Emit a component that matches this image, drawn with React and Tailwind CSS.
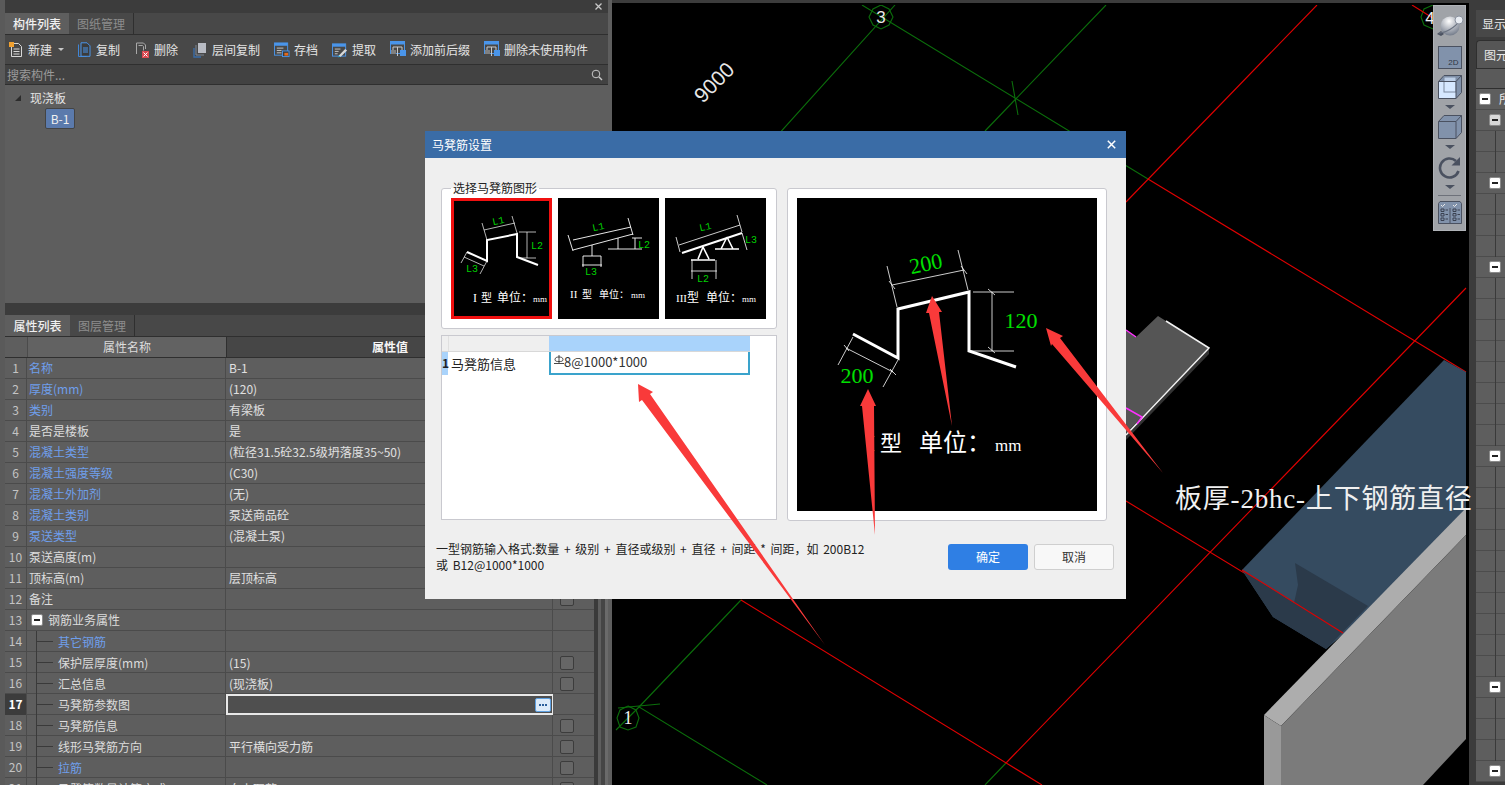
import React from "react";

const SANS = "font-['Noto_Sans_CJK_SC','Liberation_Sans',sans-serif]";

const rows = [
  ["名称", "B-1", 1, 0],
  ["厚度(mm)", "(120)", 1, 0],
  ["类别", "有梁板", 1, 0],
  ["是否是楼板", "是", 0, 0],
  ["混凝土类型", "(粒径31.5砼32.5级坍落度35~50)", 1, 0],
  ["混凝土强度等级", "(C30)", 1, 0],
  ["混凝土外加剂", "(无)", 1, 0],
  ["混凝土类别", "泵送商品砼", 1, 0],
  ["泵送类型", "(混凝土泵)", 1, 0],
  ["泵送高度(m)", "", 0, 0],
  ["顶标高(m)", "层顶标高", 0, 0],
  ["备注", "", 0, 0],
  ["钢筋业务属性", "", 0, 1],
  ["其它钢筋", "", 1, 2],
  ["保护层厚度(mm)", "(15)", 0, 2],
  ["汇总信息", "(现浇板)", 0, 2],
  ["马凳筋参数图", "", 0, 2],
  ["马凳筋信息", "", 0, 2],
  ["线形马凳筋方向", "平行横向受力筋", 0, 2],
  ["拉筋", "", 1, 2],
  ["马凳筋数量计算方式", "向上取整+1", 0, 2],
];
const checks = [12, 15, 16, 18, 19, 20, 21];

function Minus({ grey }) {
  return (
    <span className={`flex h-[12px] w-[12px] shrink-0 items-center justify-center rounded-[2px] border border-[#8a8a8a] ${grey ? "bg-[#d8d8d8]" : "bg-white"}`}>
      <span className="h-[2px] w-[6px] bg-[#222]" />
    </span>
  );
}

function Doc({ c = "#d8d8d8" }) {
  return <path d="M3.5 1.5h7l3 3v10h-10z" fill="none" stroke={c} />;
}

const tools = [
  ["复制", <svg key="a" width="16" height="16" viewBox="0 0 16 16"><path d="M2.5 2.5v12h8" fill="none" stroke="#3f86d8" /><path d="M5 .8h6l3 3v10.5H5z" fill="#3b3b3b" stroke="#4a95ea" /><path d="M7 6h5M7 8h5M7 10h5" stroke="#4a95ea" /></svg>],
  ["删除", <svg key="b" width="16" height="16" viewBox="0 0 16 16"><path d="M2.5 1v11M2.5 1h7l2 2v4" fill="none" stroke="#a8a8a8" /><path d="M4.5 3.5h4l1 1v4" fill="none" stroke="#a8a8a8" /><rect x="8" y="9" width="7" height="7" fill="#d9484f" /><path d="M9.5 10.5l4 4M13.5 10.5l-4 4" stroke="#fff" /></svg>],
  ["层间复制", <svg key="c" width="16" height="16" viewBox="0 0 16 16"><rect x="6" y="1" width="8" height="10" fill="#b9bcc4" /><path d="M4 3v10h8" fill="none" stroke="#7f8794" /><path d="M2 6v9h7" fill="none" stroke="#3a6ca6" strokeWidth="1.4" /></svg>],
  ["存档", <svg key="d" width="16" height="16" viewBox="0 0 17 16"><rect x=".5" y=".5" width="14" height="13" fill="none" stroke="#4a95ea" /><rect x=".5" y=".5" width="14" height="3" fill="#4a95ea" /><path d="M3 6h7M3 8.500h5M3 11h5" stroke="#c8c8c8" /><rect x="9" y="9" width="7" height="6" fill="#3b3b3b" stroke="#4a95ea" /><rect x="11" y="11" width="4" height="3" fill="#e4691c" /></svg>],
  ["提取", <svg key="e" width="16" height="16" viewBox="0 0 17 16"><rect x=".5" y="1.500" width="14" height="13" fill="none" stroke="#4a95ea" /><rect x=".5" y="1.500" width="14" height="3" fill="#4a95ea" /><path d="M3 7h6M3 9.500h4M3 12h3" stroke="#c8c8c8" /><path d="M7 14l7-7 2 1.500-7 7z" fill="#d8d8d8" /><path d="M6 16l2-2 1 1z" fill="#29c4e6" /></svg>],
  ["添加前后缀", <svg key="f" width="16" height="17" viewBox="0 0 16 17"><rect x=".5" y=".5" width="14" height="12" fill="none" stroke="#4a95ea" /><rect x=".5" y=".5" width="14" height="3" fill="#4a95ea" /><path d="M3 6h9M3 6v3M7.500 6v9M12 6v3" stroke="#c8c8c8" fill="none" /><rect x="10" y="9" width="6" height="6" fill="#4a95ea" /><rect x="1" y="9" width="5" height="4" fill="#808080" /></svg>],
  ["删除未使用构件", <svg key="g" width="16" height="17" viewBox="0 0 16 17"><rect x=".5" y=".5" width="14" height="12" fill="none" stroke="#4a95ea" /><rect x=".5" y=".5" width="14" height="3" fill="#4a95ea" /><path d="M3 6h9M3 6v3M7.500 6v9M12 6v3" stroke="#c8c8c8" fill="none" /><rect x="10" y="9" width="6" height="6" fill="#4a95ea" /><rect x="1" y="9" width="5" height="4" fill="#808080" /></svg>],
];

function PanelHeader({ a, b, aw, bw }) {
  return (
    <div className="flex h-[22px] shrink-0 border-b border-[#2f2f2f] bg-[#484848] text-[12px]">
      <div className={`flex items-center justify-center bg-[#5e5e5e] font-medium text-[#f0f0f0] ${aw}`}>{a}</div>
      <div className={`flex items-center justify-center border-r border-[#2f2f2f] text-[#8d8d8d] ${bw}`}>{b}</div>
    </div>
  );
}

function Row({ n, r }) {
  const [name, val, link, level] = r;
  const sel = n === 17;
  return (
    <div className="grid h-[21px] grid-cols-[22px_199px_327px_41px] border-b border-[#4b4b4b] bg-[#5e5e5e] text-[12px] leading-[20px]">
      <div className={`border-r border-[#4b4b4b] text-center ${sel ? "bg-[#3c3c3c] font-bold text-white" : "text-[#c4c4c4]"}`}>{n}</div>
      <div className={`flex items-center border-r border-[#4b4b4b] ${link ? "text-[#6f9fec]" : "text-[#dcdcdc]"}`}>
        {level === 0 && <span className="pl-[2px]">{name}</span>}
        {level === 1 && (
          <>
            <span className="ml-[4px] mr-[5px]"><Minus /></span>
            <span>{name}</span>
          </>
        )}
        {level === 2 && (
          <>
            <span className="ml-[9px] h-[21px] w-[1px] bg-[#3a3a3a]" />
            <span className="h-[1px] w-[16px] bg-[#3a3a3a]" />
            <span className="ml-[5px]">{name}</span>
          </>
        )}
      </div>
      <div className={`flex items-center justify-between border-r border-[#4b4b4b] pl-[3px] text-[#e0e0e0] ${sel ? "border-2 border-[#e8e8e8] bg-[#4f4f4f] pr-[1px]" : ""}`}>
        <span>{val}</span>
        {sel && (
          <span className="flex h-[14px] w-[16px] items-center justify-center gap-[1px] rounded-[2px] border border-[#5d9fe0] bg-[#dcebfa]">
            <span className="h-[2px] w-[2px] bg-[#2a5f9c]" />
            <span className="h-[2px] w-[2px] bg-[#2a5f9c]" />
            <span className="h-[2px] w-[2px] bg-[#2a5f9c]" />
          </span>
        )}
      </div>
      <div className="flex items-center justify-center pr-[13px]">
        {checks.includes(n) && <span className="h-[14px] w-[14px] rounded-[2px] border border-[#3c3c3c] bg-[#666]" />}
      </div>
    </div>
  );
}

function LeftColumn() {
  return (
    <div className="flex w-[612px] shrink-0">
      <div className="w-[5px] bg-[#5a5a5a]" />
      <div className="flex w-[603px] flex-col">
        <div className="flex h-[13px] shrink-0 items-center justify-end bg-[#3c3c3c] pr-[6px]">
          <svg width="7" height="7" viewBox="0 0 7 7"><path d="M.5.5l6 6M6.500.5l-6 6" stroke="#c8c8c8" strokeWidth="1.3" /></svg>
        </div>
        <PanelHeader a="构件列表" b="图纸管理" aw="w-[64px]" bw="w-[65px]" />
        <div className="flex h-[30px] shrink-0 items-center gap-[14px] border-b border-[#2f2f2f] bg-[#484848] pl-[3px] text-[12px] text-[#e4e4e4]">
          <div className="flex w-[54px] items-center gap-[4px]">
            <svg width="16" height="16" viewBox="0 0 16 16" className="shrink-0"><Doc /><path d="M5.500 7h6M5.500 9.500h6M5.500 12h6" stroke="#d8d8d8" /><rect x="1" y="0" width="5" height="5" fill="#f0a030" /></svg>
            <span className="shrink-0">新建</span>
            <span className="ml-[2px] h-0 w-0 shrink-0 border-x-[3px] border-t-[3px] border-x-transparent border-t-[#c8c8c8]" />
          </div>
          {tools.map(([t, ic]) => (
            <div key={t} className="flex items-center gap-[4px]">
              {ic}
              <span>{t}</span>
            </div>
          ))}
        </div>
        <div className="flex h-[20px] shrink-0 items-center justify-between border-b border-[#2f2f2f] bg-[#424242] pl-[2px] pr-[5px] text-[12px] text-[#9a9a9a]">
          <span>搜索构件...</span>
          <svg width="12" height="12" viewBox="0 0 12 12"><circle cx="5" cy="5" r="3.800" fill="none" stroke="#c8c8c8" /><path d="M8 8l3 3" stroke="#c8c8c8" strokeWidth="1.400" /></svg>
        </div>
        <div className="flex h-[213px] shrink-0 flex-col bg-[#5e5e5e] text-[12px] text-[#e4e4e4]">
          <div className="flex h-[23px] items-center pl-[10px] pt-[2px]">
            <span className="h-0 w-0 border-b-[6px] border-l-[6px] border-b-[#2c2c2c] border-l-transparent" />
            <span className="ml-[9px]">现浇板</span>
          </div>
          <div className="ml-[40px] flex h-[21px] w-[30px] items-center justify-center rounded-[2px] border border-[#444] bg-[#5b7aac] text-[#f0f0f0]">B-1</div>
        </div>
        <div className="h-[5px] shrink-0 bg-[#5e5e5e]" />
        <div className="h-[12px] shrink-0 bg-[#3c3c3c]" />
        <PanelHeader a="属性列表" b="图层管理" aw="w-[65px]" bw="w-[65px]" />
        <div className="flex min-h-0 flex-1">
          <div className="w-[589px] overflow-hidden">
            <div className="grid h-[21px] grid-cols-[22px_199px_327px_41px] border-b border-[#2f2f2f] text-[12px] leading-[20px]">
              <div className="bg-[#5e5e5e]" />
              <div className="border-l border-[#4b4b4b] bg-[#626262] text-center text-[#dcdcdc]">属性名称</div>
              <div className="border-l border-[#2f2f2f] bg-[#464646] text-center font-bold text-[#f5f5f5]">属性值</div>
              <div className="bg-[#5e5e5e]" />
            </div>
            {rows.map((r, i) => <Row key={i} n={i + 1} r={r} />)}
          </div>
          <div className="w-[4px] bg-[#3a3a3a]" />
          <div className="flex-1 bg-[#5e5e5e]" />
          <div className="w-[4px] bg-[#454545]" />
          <div className="w-[3px] bg-[#6a6a6a]" />
        </div>
      </div>
      <div className="w-[4px] bg-[#5e5e5e]" />
    </div>
  );
}

function Canvas() {
  return (
    <div className="relative w-[857px] shrink-0 border-t-[3px] border-[#3c3c3c] bg-black">
      <svg width="857" height="782" viewBox="612 3 857 782" className="block">
        <defs>
          <clipPath id="cv"><rect x="612" y="5" width="857" height="780" /></clipPath>
        </defs>
        <g clipPath="url(#cv)">
          <g fill="none" stroke="#0b6e0b" strokeWidth="1.100">
            <path d="M862 5L1148 179M895 5L741 176M741 600L639 707L767 785M1106 5L985 131M1012 81L1018 115" />
            <path d="M616 730L639 707M618 708L660 704M1006 763L985 785" />
            <polygon points="881,5 889,9 893,17 889,25 881,29 873,25 869,17 873,9" />
            <polygon points="628,706 636,710 639,718 636,727 628,730 620,727 617,718 620,710" />
            <polygon points="1433,5 1424,9 1421,17 1424,25 1433,29 1441,25 1445,17 1441,9" />
          </g>
          <g fill="none" stroke="#e00000" strokeWidth="1.100">
            <path d="M1317 5L1126 202M1148 179L1466 372M1466 288L1006 763M741 600L1042 785M1126 501L1343 633M1412 5L1436 20" />
          </g>
          <polygon points="1444,360 1466,372 1466,530 1326,649 1273,617 1242,570" fill="#354b60" />
          <polygon points="1242,570 1273,617 1326,649 1368,606 1295,563 1298,585 1294,603" fill="#2b3a4a" />
          <path d="M1242 570L1343 633" stroke="#e00000" strokeWidth="1.100" />
          <polygon points="1264,715 1466,508 1466,535 1281,726" fill="#adadad" />
          <polygon points="1281,726 1466,535 1466,739 1423,785 1281,785" fill="#7b7b7b" />
          <polygon points="1264,715 1281,726 1281,785 1264,785" fill="#999999" />
          <polygon points="1126,440 1209,354 1209,348 1126,430" fill="#333333" />
          <polygon points="1126,330 1136,337 1158,316 1209,348 1126,433" fill="#555555" />
          <path d="M1166 321L1209 348L1126 435" fill="none" stroke="#f2f2f2" strokeWidth="1.500" />
          <path d="M1126 330L1136 337M1126 408L1142 417L1137 424" fill="none" stroke="#ff30ff" strokeWidth="1.500" />
          <text x="714.500" y="90" transform="rotate(-45 714 83)" textAnchor="middle" fontFamily="Liberation Sans" fontSize="21" fill="#e8e8e8">9000</text>
          <text x="881" y="23" textAnchor="middle" fontFamily="Liberation Sans" fontSize="17" fill="#e8e8e8">3</text>
          <text x="628" y="724" textAnchor="middle" fontFamily="Liberation Serif" fontSize="18" fill="#f0f0f0">1</text>
          <text x="1430" y="24" textAnchor="middle" fontFamily="Liberation Sans" fontSize="17" fill="#f0f0f0">4</text>
        </g>
      </svg>
      <ViewBar />
    </div>
  );
}

function Arrow2() {
  return <span className="my-[6px] h-0 w-0 shrink-0 border-x-[5px] border-t-[4px] border-x-transparent border-t-[#4a5160]" />;
}

function ViewBar() {
  return (
    <div className="absolute left-[821px] top-[2px] flex h-[226px] w-[33px] flex-col items-center border border-[#b0b3b8] bg-[#a0a3a8] pt-[7px]">
      <svg width="28" height="24" viewBox="0 0 28 24" className="shrink-0">
        <defs>
          <radialGradient id="sp" cx="0.45" cy="0.25" r="0.85"><stop offset="0" stopColor="#ffffff" /><stop offset="1" stopColor="#626b7c" /></radialGradient>
        </defs>
        <path d="M1 21l4-3 3 3-3 2z" fill="#4a5160" />
        <circle cx="14" cy="13" r="9.500" fill="url(#sp)" />
        <path d="M3 20C9 20 19 15 24 7" fill="none" stroke="#6a7280" strokeWidth="1.200" />
        <circle cx="23" cy="7" r="4" fill="#e8ecf2" stroke="#8a919e" />
      </svg>
      <div className="relative mt-[9px] h-[23px] w-[24px] shrink-0 border border-[#4a5160] bg-[#8192ab]">
        <span className="absolute bottom-0 right-[2px] font-['Liberation_Sans',sans-serif] text-[8px] leading-[10px] text-[#2f3644]">2D</span>
      </div>
      <svg width="24" height="24" viewBox="0 0 24 24" className="mt-[6px] shrink-0"><path d="M.5 6.500L6 .5h17.500v17L18 23.500H.5z" fill="#8192ab" stroke="#4a5160" /><rect x="1" y="7" width="17" height="16" fill="#d6e8ff" /><rect x="6" y="2" width="12" height="15" fill="#d6e8ff" fillOpacity=".7" stroke="#7c8aa0" /><path d="M.5 6.500h17.500v17M18 6.500l5.500-6" fill="none" stroke="#4a5160" /></svg>
      <Arrow2 />
      <svg width="24" height="24" viewBox="0 0 24 24" className="shrink-0"><path d="M.5 6.500L6 .5h17.500v17L18 23.500H.5z" fill="#8192ab" stroke="#4a5160" /><path d="M.5 6.500h17.500v17M18 6.500l5.500-6" fill="none" stroke="#4a5160" /></svg>
      <Arrow2 />
      <svg width="24" height="23" viewBox="0 0 24 23" className="mt-[1px] shrink-0"><path d="M20.500 15A9.500 9.500 0 1 1 18 5" fill="none" stroke="#4a5160" strokeWidth="2.600" /><path d="M22 1v8.500h-8.500z" fill="#4a5160" /></svg>
      <Arrow2 />
      <div className="h-[1px] w-[23px] shrink-0 bg-[#6d717a]" />
      <svg width="24" height="23" viewBox="0 0 24 23" className="mt-[5px] shrink-0"><path d="M.5 2.500L2 .5h20l1.500 2v20H.5z" fill="#8192ab" stroke="#4a5160" /><path d="M12 7v15" stroke="#4a5160" /><path d="M3 4l1.500 1.500L7 3M15 4l1.500 1.500L19 3" fill="none" stroke="#e8e8e8" /><path d="M3 8h3v2.500H3zM3 12.500h3v2.500H3zM3 17h3v2.500H3zM15 8h3v2.500h-3zM15 12.500h3v2.500h-3zM15 17h3v2.500h-3z" fill="none" stroke="#3a4150" /><path d="M7.500 9h2.500M7.500 13.500h2.500M7.500 18h2.500M19.500 9h2.500M19.500 13.500h2.500M19.500 18h2.500" stroke="#3a4150" /></svg>
    </div>
  );
}

function RightColumn() {
  const minus = { 0: 1, 1: 2, 4: 3, 8: 3, 17: 3, 28: 3, 32: 3 };
  return (
    <div className="flex min-w-0 flex-1">
      <div className="w-[7px] shrink-0 bg-[#3c3c3c]" />
      <div className="flex min-w-0 flex-1 flex-col overflow-hidden whitespace-nowrap">
        <div className="h-[10px] shrink-0 bg-[#3c3c3c]" />
        <div className="flex h-[27px] shrink-0 items-center bg-[#484848] pl-[6px] text-[12px] text-[#e8e8e8]">显示</div>
        <div className="h-[3px] shrink-0 bg-[#3c3c3c]" />
        <div className="flex h-[28px] shrink-0 items-center rounded-tl-[4px] border-l border-t border-[#2f2f2f] bg-[#565656] pl-[7px] text-[12px] text-[#e8e8e8]">图元</div>
        <div className="h-[21px] shrink-0 border-y border-[#2f2f2f] bg-[#5a5a5a]" />
        <div className="shrink-0 bg-[#5e5e5e]">
          {Array.from({ length: 33 }).map((_, i) => (
            <div key={i} className="flex h-[21px] items-center border-b border-[#4c4c4c] pl-[3px] text-[12px] text-[#e8e8e8]">
              {minus[i] === 1 && <><Minus /><span className="ml-[8px]">所</span></>}
              {minus[i] >= 2 && <span className="ml-[10px]"><Minus grey={minus[i] === 2} /></span>}
              {!minus[i] && <span className="ml-[16px] h-[21px] w-[1px] bg-[#3a3a3a]" />}
            </div>
          ))}
        </div>
      </div>
    </div>
  );
}

function Thumb({ sel, children, vb, w = 101 }) {
  return (
    <div className={`h-[121px] w-[101px] shrink-0 bg-black ${sel ? "border-[3px] border-[#f01010]" : ""}`}>
      <svg width={sel ? 95 : w} height={sel ? 115 : 121} viewBox={vb} className="block">{children}</svg>
    </div>
  );
}

const lbl = { fontFamily: "Liberation Mono", fontSize: 10, fill: "#00d000" };

function Cap({ y, size = 12, parts }) {
  return (
    <text y={y} fontFamily="'Liberation Serif','Noto Sans CJK SC',serif" fontSize={size} fill="#fff">
      {parts.map(([x, t, s]) => (
        <tspan key={x} x={x} fontSize={s || size}>{t}</tspan>
      ))}
    </text>
  );
}

function Dialog() {
  return (
    <div className={`absolute left-[425px] top-[131px] flex h-[468px] w-[701px] flex-col bg-[#efefef] text-[#222] ${SANS}`}>
      <div className="flex h-[27px] shrink-0 items-center justify-between bg-[#3a6ca6] pl-[7px] pr-[10px] text-[12px] text-white">
        <span>马凳筋设置</span>
        <svg width="9" height="9" viewBox="0 0 9 9"><path d="M.8.8l7.400 7.400M8.200.8L.8 8.200" stroke="#fff" strokeWidth="1.500" /></svg>
      </div>
      <div className="flex px-[16px] pt-[30px]">
        <div className="flex w-[336px] flex-col gap-[6px]">
          <div className="relative flex h-[141px] gap-[6px] rounded-[3px] border border-[#c9c9cf] bg-white pl-[9px] pt-[9px]">
            <span className="absolute left-[9px] top-[-9px] px-[2px] text-[12px] leading-[16px] text-[#222] [background:linear-gradient(#efefef_50%,#fff_50%)]">选择马凳筋图形</span>
            <Thumb sel vb="454 201 95 115">
              <path d="M467 252L487 261V240L517 234V257L538 265" fill="none" stroke="#fff" strokeWidth="2" />
              <path d="M482 223L487 240M512 216L517 233M484 230L515 223M519 232H536M519 258H536M527 232V258M467 252L461 263M487 261L480 274M464 257L484 266" fill="none" stroke="#fff" strokeWidth=".7" />
              <text x="499" y="224" transform="rotate(-12 499 224)" textAnchor="middle" {...lbl}>L1</text>
              <text x="537" y="249" textAnchor="middle" {...lbl}>L2</text>
              <text x="472" y="272" textAnchor="middle" {...lbl}>L3</text>
              <Cap y={302} parts={[[473, "I"], [481, "型", 11], [497, "单位："], [533, "mm", 9]]} />
            </Thumb>
            <Thumb vb="558 198 101 121">
              <path d="M573 240L631 227M573 250L633 234M568 235L573 251M628 218L633 235M608 249H632M618 238V249M632 238H642M632 249H642M635 238V249M592 245V256M583 256H601M583 256V267M601 256V267M582 265H602" fill="none" stroke="#fff" strokeWidth=".9" />
              <text x="599" y="230" transform="rotate(-12 599 230)" textAnchor="middle" {...lbl}>L1</text>
              <text x="644" y="248" textAnchor="middle" {...lbl}>L2</text>
              <text x="591" y="275" textAnchor="middle" {...lbl}>L3</text>
              <Cap y={298} size={10} parts={[[570, "II", 11], [582, "型"], [599, "单位："], [631, "mm", 9]]} />
            </Thumb>
            <Thumb vb="665 198 101 121">
              <path d="M682 253L742 233" fill="none" stroke="#fff" strokeWidth="2" />
              <path d="M727 237L721 249M727 237L733 249M703 247L698 259M703 247L709 259M715 249H739M691 260H715" fill="none" stroke="#fff" strokeWidth="1.600" />
              <path d="M679 245L740 225M676 237L680 252M737 215L742 232M692 260V279M716 260V279M691 271H717M742 233L747 250" fill="none" stroke="#fff" strokeWidth=".8" />
              <text x="706" y="230" transform="rotate(-12 706 230)" textAnchor="middle" {...lbl}>L1</text>
              <text x="703" y="282" textAnchor="middle" {...lbl}>L2</text>
              <text x="751" y="243" textAnchor="middle" {...lbl}>L3</text>
              <Cap y={302} parts={[[676, "III", 11], [687, "型"], [706, "单位："], [742, "mm", 9]]} />
            </Thumb>
          </div>
          <div className="h-[185px] border border-[#c9c9cf] bg-white">
            <div className="grid h-[16px] w-[308px] grid-cols-[6px_101px_201px] border-b border-[#d8d8d8]">
              <div className="bg-[#efefef]" />
              <div className="border-l border-[#e0e0e0] bg-[#efefef]" />
              <div className="bg-[#a9d3fb]" />
            </div>
            <div className="grid h-[22px] w-[308px] grid-cols-[6px_101px_201px]">
              <div className="bg-[#a9d3fb] text-[12px] font-bold leading-[22px]">1</div>
              <div className="pl-[3px] text-[13px] leading-[23px]">马凳筋信息</div>
              <div className="flex items-center border-x-2 border-b-2 border-[#3aa3cc] pl-[3px] text-[13px] text-[#333]">
                <svg width="10" height="9" viewBox="0 0 10 9" className="mt-[-6px] shrink-0"><path d="M5 0v8M1 4.500C1 2.500 3 2 5 2s4 .5 4 2.500-2 2-4 2-4 0-4-2zM0 8.500h10" fill="none" stroke="#333" strokeWidth=".9" /></svg>
                <span className="mt-[-2px]">8@1000*1000</span>
              </div>
            </div>
          </div>
        </div>
        <div className="ml-[10px] flex h-[333px] w-[320px] items-start rounded-[3px] border border-[#c9c9cf] bg-white p-[9px]">
          <svg width="300" height="313" viewBox="797 198 300 313" className="block bg-black">
            <path d="M853 334L898 358V309L969 292V351L1016 367" fill="none" stroke="#fff" strokeWidth="3" />
            <path d="M887 266L897 307M958 250L968 290M892 285L964 270M973 292H1014M969 351H1014M992 292V351M988 289L995 295M988 347L995 353M853 337L838 365M898 360L883 387M846 348L893 372M889 281L895 289M961 266L967 274M844 345L849 351M890 369L896 375" fill="none" stroke="#fff" strokeWidth=".8" />
            <text x="926" y="271" transform="rotate(-12 926 264)" textAnchor="middle" fontFamily="Liberation Serif" fontSize="22" fill="#00e000">200</text>
            <text x="1021" y="328" textAnchor="middle" fontFamily="Liberation Serif" fontSize="22" fill="#00e000">120</text>
            <text x="857" y="383" textAnchor="middle" fontFamily="Liberation Serif" fontSize="22" fill="#00e000">200</text>
            <Cap y={451} size={24} parts={[[867, "I"], [880, "型", 22], [919, "单位："], [995, "mm", 17]]} />
          </svg>
        </div>
      </div>
      <div className="relative flex flex-1 items-start justify-between pl-[11px] pr-[12px] pt-[20px] text-[12px] leading-[16px]">
        <p className="w-[450px] [word-spacing:2px]">一型钢筋输入格式:数量 + 级别 + 直径或级别 + 直径 + 间距 * 间距，如 200B12<br />或 B12@1000*1000</p>
        <div className="flex gap-[6px] pt-[3px]">
          <button className="h-[26px] w-[80px] rounded-[3px] bg-[#2f7fe4] text-[12px] text-white">确定</button>
          <button className="h-[26px] w-[80px] rounded-[3px] border border-[#cfcfcf] bg-[#f8f8f8] text-[12px] text-[#333]">取消</button>
        </div>
      </div>
    </div>
  );
}

function Annotations() {
  return (
    <svg width="1505" height="785" viewBox="0 0 1505 785" className="pointer-events-none absolute left-0 top-0">
      <g fill="#f93a3a">
        <polygon points="638,384 653,392 650,394 825,645 642,400 639,402" />
        <polygon points="868,389 876,406 874,406 875,535 862,406 860,406" />
        <polygon points="932,296 942,312 939,312 952,426 929,313 926,313" />
        <polygon points="1046,328 1063,336 1060,338 1163,473 1052,344 1051,346" />
      </g>
      <text x="1175" y="508" fontFamily="'Liberation Serif','Noto Sans CJK SC',serif" fontSize="27" letterSpacing=".8" fill="#f0f0f0">板厚-2bhc-上下钢筋直径</text>
    </svg>
  );
}

export default function App() {
  return (
    <div className={`relative h-[785px] w-[1505px] overflow-hidden bg-[#3c3c3c] ${SANS}`}>
      <div className="flex h-[785px]">
        <LeftColumn />
        <Canvas />
        <RightColumn />
      </div>
      <Dialog />
      <Annotations />
    </div>
  );
}
